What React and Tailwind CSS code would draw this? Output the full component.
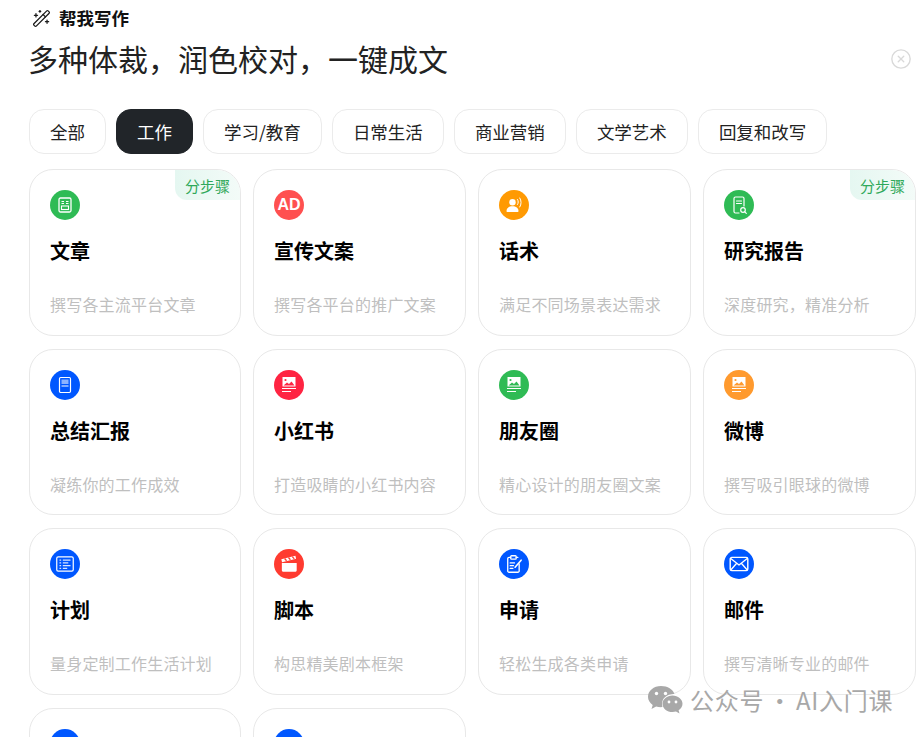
import { WandSparkles, CircleX } from "lucide-react";

const tabs = ["全部", "工作", "学习/教育", "日常生活", "商业营销", "文学艺术", "回复和改写"];

const ArticleIcon = () => (
  <svg viewBox="0 0 20 20" className="w-[20px] h-[20px]" fill="none" stroke="white">
    <rect x="4" y="3" width="12" height="14" rx="1.500" strokeWidth="1.300" />
    <path d="M6.500 6.500h2.500M6.500 8.500h2.500M11 6.500h2.500M11 8.500h2.500" strokeWidth="1" />
    <rect x="6.500" y="11" width="7" height="3.500" strokeWidth="1.100" />
  </svg>
);

const SpeechIcon = () => (
  <svg viewBox="0 0 20 20" className="w-[20px] h-[20px]" fill="none">
    <circle cx="8.500" cy="7.200" r="3.200" fill="white" />
    <path d="M2.500 16c0-3 2.500-4.800 6-4.800s6 1.800 6 4.800c0 .6-.4 1-1 1h-10c-.6 0-1-.4-1-1z" fill="white" />
    <path d="M13.500 4.500c1 1.400 1 3.600 0 5M15.800 3c1.700 2.400 1.700 6.600 0 9" stroke="white" strokeWidth="1" strokeLinecap="round" />
  </svg>
);

const ReportIcon = () => (
  <svg viewBox="0 0 20 20" className="w-[20px] h-[20px]" fill="none" stroke="white" strokeLinecap="round">
    <path d="M10 18H6.500A1.500 1.500 0 0 1 5 16.500V3.500A1.500 1.500 0 0 1 6.500 2h7A1.500 1.500 0 0 1 15 3.500V11" strokeWidth="1.200" />
    <path d="M7.500 6h5M7.500 8.500h5" strokeWidth="1.100" />
    <circle cx="14" cy="15" r="2.300" strokeWidth="1.200" />
    <path d="M15.800 16.800l1.500 1.500" strokeWidth="1.200" />
  </svg>
);

const SummaryIcon = () => (
  <svg viewBox="0 0 20 20" className="w-[20px] h-[20px]" fill="none">
    <rect x="4.500" y="2.500" width="11" height="15" rx="1.200" stroke="white" strokeWidth="1.200" />
    <rect x="6.500" y="4.500" width="7" height="4.500" fill="white" fillOpacity="0.55" />
    <path d="M6.500 11h7" stroke="white" strokeWidth="1.200" />
  </svg>
);

const PictureIcon = () => (
  <svg viewBox="0 0 20 20" className="w-[20px] h-[20px]" fill="none">
    <rect x="3.500" y="2" width="13" height="9.500" fill="white" />
    <path d="M4.500 10.500l3.500-3 2 1.500 2.500-2.500 3 4z" fill="currentColor" />
    <circle cx="6.500" cy="5" r="1.100" fill="currentColor" />
    <path d="M3 13.500h14" stroke="white" strokeWidth="1" />
    <path d="M3 16.500h9" stroke="white" strokeWidth="1" />
  </svg>
);

const PlanIcon = () => (
  <svg viewBox="0 0 20 20" className="w-[22px] h-[22px]" fill="none" stroke="white">
    <rect x="2.500" y="3.500" width="15" height="13" rx="1.300" strokeWidth="1.100" />
    <path d="M5 6.500h1.500M8 6.500h7M5 9h1.500M8 9h5M5 11.500h1.500M8 11.500h7M5 14h1.500M8 14h4" strokeWidth="1" strokeOpacity="0.85" />
  </svg>
);

const ClapperIcon = () => (
  <svg viewBox="0 0 20 20" className="w-[22px] h-[22px]">
    <path d="M3.500 9h13.500v7a1 1 0 0 1-1 1H4.500a1 1 0 0 1-1-1z" fill="white" />
    <path d="M3 5.600L15.800 2.500l.7 2.800L3.700 8.400z" fill="white" />
    <path d="M6 5l1.800 2M9.500 4.100l1.800 2M13 3.300l1.800 2" stroke="#ff3b30" strokeWidth="1.200" />
  </svg>
);

const ApplyIcon = () => (
  <svg viewBox="0 0 20 20" className="w-[22px] h-[22px]" fill="none" stroke="white" strokeLinecap="round">
    <path d="M7 4H5.500A1.200 1.200 0 0 0 4.300 5.200v11.100a1.200 1.200 0 0 0 1.200 1.200h8a1.200 1.200 0 0 0 1.200-1.200V10M12 4h1.500" strokeWidth="1.200" />
    <rect x="7" y="2.500" width="5" height="3" rx="0.800" strokeWidth="1.200" />
    <path d="M6.500 9h4M6.500 11.500h3M6.500 14h2.500" strokeWidth="1.100" />
    <path d="M11 13l5.500-6.500" strokeWidth="1.400" />
  </svg>
);

const MailIcon = () => (
  <svg viewBox="0 0 20 20" className="w-[22px] h-[22px]" fill="none" stroke="white" strokeLinejoin="round">
    <rect x="2" y="4" width="16" height="12" rx="1.500" strokeWidth="1.300" />
    <path d="M2.500 5l7.500 6 7.500-6M2.500 15.500l5.200-6M17.500 15.500l-5.200-6" strokeWidth="1.200" />
  </svg>
);

const cards = [
  { title: "文章", desc: "撰写各主流平台文章", color: "bg-[#2fbb55]", icon: <ArticleIcon />, step: true },
  { title: "宣传文案", desc: "撰写各平台的推广文案", color: "bg-[#ff5050]", icon: <span className="font-['Liberation_Sans',sans-serif] text-[16px] font-bold text-white leading-none">AD</span> },
  { title: "话术", desc: "满足不同场景表达需求", color: "bg-[#ff9a03]", icon: <SpeechIcon /> },
  { title: "研究报告", desc: "深度研究，精准分析", color: "bg-[#2fbb55]", icon: <ReportIcon />, step: true },
  { title: "总结汇报", desc: "凝练你的工作成效", color: "bg-[#0057ff]", icon: <SummaryIcon /> },
  { title: "小红书", desc: "打造吸睛的小红书内容", color: "bg-[#ff2442] text-[#ff2442]", icon: <PictureIcon /> },
  { title: "朋友圈", desc: "精心设计的朋友圈文案", color: "bg-[#2fbb55] text-[#2fbb55]", icon: <PictureIcon /> },
  { title: "微博", desc: "撰写吸引眼球的微博", color: "bg-[#ff9a2e] text-[#ff9a2e]", icon: <PictureIcon /> },
  { title: "计划", desc: "量身定制工作生活计划", color: "bg-[#0057ff]", icon: <PlanIcon /> },
  { title: "脚本", desc: "构思精美剧本框架", color: "bg-[#ff3b30]", icon: <ClapperIcon /> },
  { title: "申请", desc: "轻松生成各类申请", color: "bg-[#0057ff]", icon: <ApplyIcon /> },
  { title: "邮件", desc: "撰写清晰专业的邮件", color: "bg-[#0057ff]", icon: <MailIcon /> },
  { title: "", desc: "", color: "bg-[#0057ff]", icon: null },
  { title: "", desc: "", color: "bg-[#0057ff]", icon: null },
];

const WechatMark = () => (
  <svg viewBox="0 0 36 32" className="w-[36px] h-[32px]">
    <path d="M14 2C6.800 2 1 6.800 1 12.700c0 3.300 1.800 6.200 4.700 8.200L4.500 25l4.600-2.500c1.600.5 3.200.7 4.900.7.500 0 1 0 1.500-.1-.3-1-.5-2-.5-3.100 0-5.600 5-10 11.400-10h1C26.100 5.400 20.600 2 14 2z" fill="#a8a8a8" />
    <circle cx="9.500" cy="9.500" r="1.700" fill="white" />
    <circle cx="18.500" cy="9.500" r="1.700" fill="white" />
    <path d="M25.500 11.500c-5.500 0-10 3.700-10 8.300s4.500 8.300 10 8.300c1.200 0 2.400-.2 3.500-.5l3.500 2-.9-3.300c2.300-1.500 3.900-3.900 3.900-6.500 0-4.600-4.500-8.300-10-8.300z" fill="#a8a8a8" />
    <circle cx="22" cy="18" r="1.400" fill="white" />
    <circle cx="29" cy="18" r="1.400" fill="white" />
  </svg>
);

const Card = ({ title, desc, color, icon, step }) => (
  <div className="relative h-[166.5px] rounded-[24px] border border-[#e8e8e8] bg-white pl-[20px] pt-[20px] overflow-hidden">
    {step && (
      <div className="absolute right-0 top-0 flex h-[30px] w-[65px] items-center justify-center rounded-bl-[12px] bg-gradient-to-r from-[#e5f7f1] to-[#f3fbf8] text-[15px] leading-none text-[#2fa85a]">
        分步骤
      </div>
    )}
    <div className={`flex h-[30px] w-[30px] items-center justify-center rounded-full ${color}`}>
      {icon}
    </div>
    <div className="mt-[16px] h-[30px] text-[20px] font-bold leading-[30px] text-black">{title}</div>
    <div className="mt-[26px] text-[16px] leading-[24px] tracking-[0.2px] text-[#bfbfbf]">{desc}</div>
  </div>
);

export default function App() {
  return (
    <div className="relative h-[737px] w-[922px] overflow-hidden bg-white font-['Noto_Sans_CJK_SC',sans-serif]">
      <div className="pl-[29px] pr-[6px]">
        <div className="flex h-[36px] items-center gap-[8px] pl-[3px]">
          <WandSparkles size={19} strokeWidth={1.600} className="text-[#1a1a1a]" />
          <span className="text-[17.500px] font-bold leading-none text-[#111]">帮我写作</span>
        </div>
        <div className="relative h-[47px]">
          <h1 className="-ml-[1px] text-[30px] font-normal leading-[44px] text-[#222]">多种体裁，润色校对，一键成文</h1>
          <CircleX size={22} strokeWidth={1.500} className="absolute right-[4px] top-[12px] text-[#d9d9d9]" />
        </div>
        <div className="mt-[26px] flex gap-[10px]">
          {tabs.map((tab) => (
            <div
              key={tab}
              className={`flex h-[45px] items-center rounded-[15px] px-[20px] text-[17.500px] leading-none ${
                tab === "工作"
                  ? "border border-[#212529] bg-[#212529] text-white"
                  : "border border-[#ebebeb] bg-white text-[#222]"
              }`}
            >
              {tab}
            </div>
          ))}
        </div>
        <div className="mt-[15px] grid grid-cols-[212px_213px_213px_213px] gap-x-[12px] gap-y-[13px]">
          {cards.map((card, i) => (
            <Card key={i} {...card} />
          ))}
        </div>
      </div>
      <div className="absolute left-[647px] top-[684px] flex items-center gap-[7px]">
        <WechatMark />
        <span className="text-[24px] leading-[32px] tracking-[0.7px] [word-spacing:-2.5px] text-[#a8a8a8]">公众号 · AI入门课</span>
      </div>
    </div>
  );
}
